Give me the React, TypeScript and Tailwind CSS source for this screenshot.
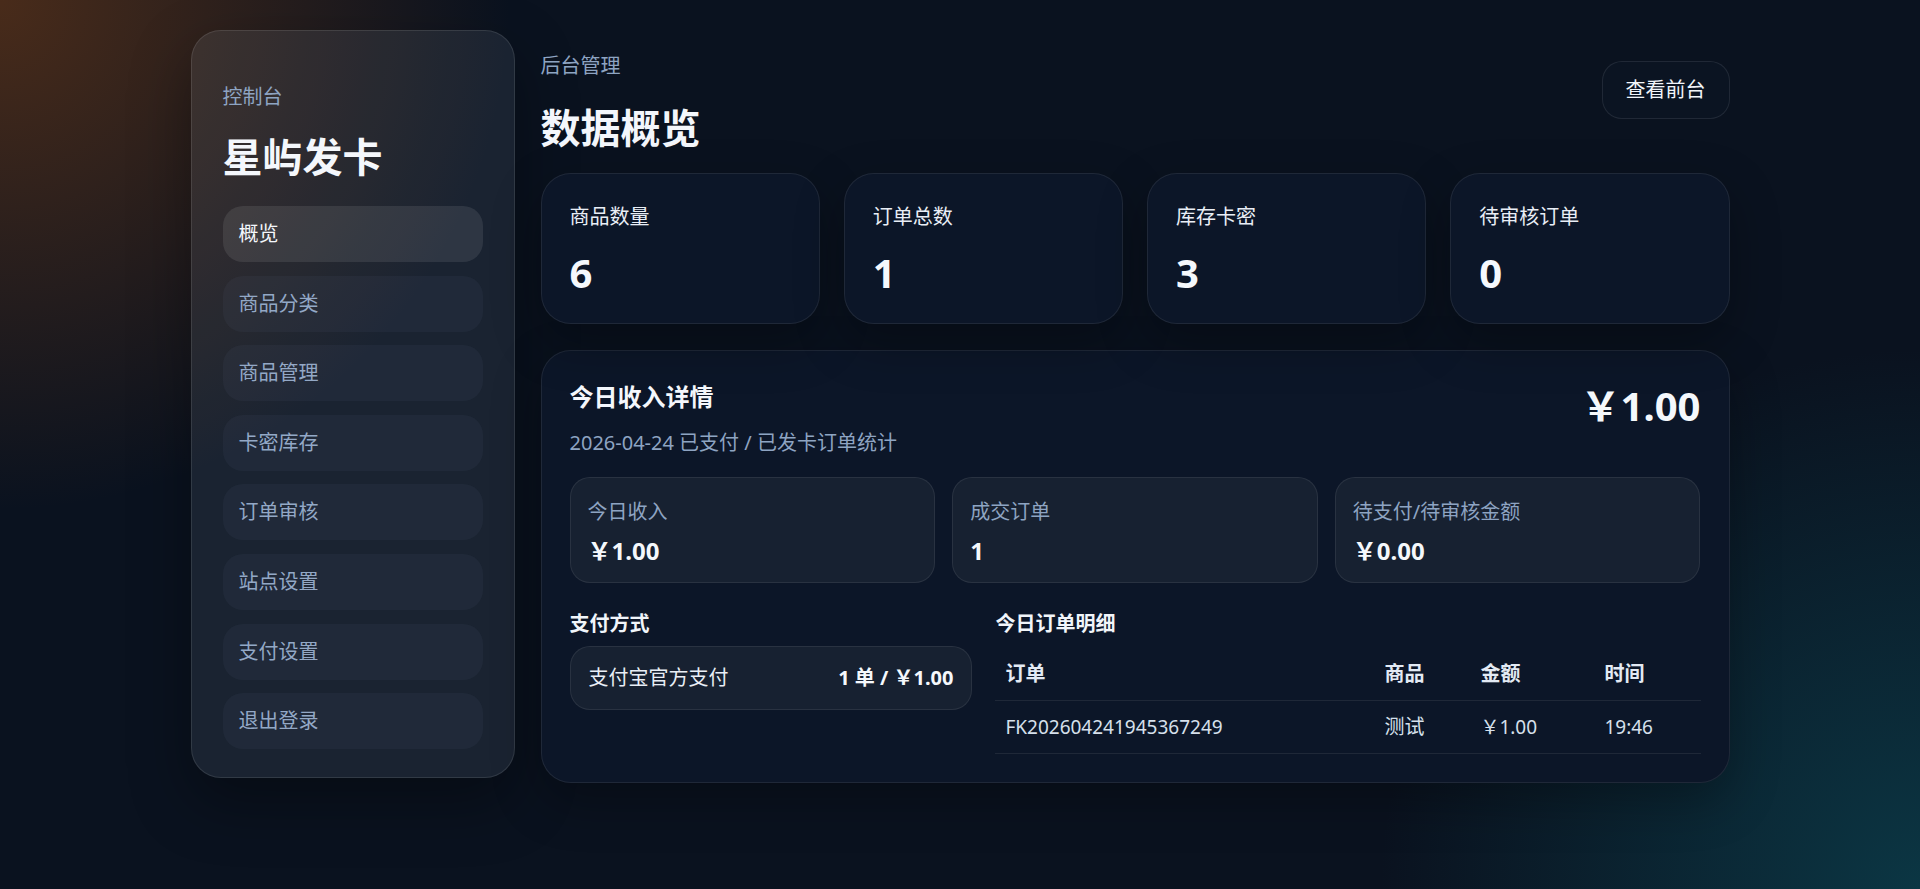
import React from 'react'

const navItems = ['概览', '商品分类', '商品管理', '卡密库存', '订单审核', '站点设置', '支付设置', '退出登录']

const stats = [
  { label: '商品数量', value: '6' },
  { label: '订单总数', value: '1' },
  { label: '库存卡密', value: '3' },
  { label: '待审核订单', value: '0' },
]

const todayBoxes = [
  { label: '今日收入', value: '￥1.00' },
  { label: '成交订单', value: '1' },
  { label: '待支付/待审核金额', value: '￥0.00' },
]

const orders = [{ id: 'FK202604241945367249', product: '测试', amount: '￥1.00', time: '19:46' }]

export default function App() {
  return (
    <div
      className="min-h-screen w-full bg-[#0a121f] bg-[image:radial-gradient(680px_circle_at_0%_0%,rgba(124,64,22,0.55),transparent_75%),radial-gradient(720px_circle_at_100%_100%,rgba(12,78,92,0.6),transparent_75%)] text-white"
      style={{ fontFamily: '"Noto Sans", "Noto Sans CJK SC", sans-serif' }}
    >
      <div className="mx-auto flex w-[1539px] items-start gap-[26px] pt-[30px] pb-[60px]">
        <Sidebar />

        <main className="min-w-0 flex-1">
          {/* header */}
          <div className="flex items-start justify-between pt-[21px]">
            <div>
              <div className="text-[20px] leading-[30px] text-[#8ea4c2]">后台管理</div>
              <h1 className="mt-[23px] text-[40px] font-bold leading-[48px] text-[#f3f6fb]">数据概览</h1>
            </div>
            <button className="mt-[10px] h-[58px] rounded-[20px] border border-white/[0.09] bg-[#0c1524]/60 px-[23px] text-[20px] leading-[30px] text-[#f1f5fa]">
              查看前台
            </button>
          </div>

          {/* stat cards */}
          <div className="mt-[21px] grid grid-cols-4 gap-[24px]">
            {stats.map((s) => (
              <div
                key={s.label}
                className="rounded-[30px] border border-white/[0.08] bg-[#0c1628] px-[28px] pt-[28px] pb-[26px] shadow-[0_18px_50px_rgba(0,0,0,0.3)]"
              >
                <div className="text-[20px] leading-[30px] text-[#e9eef6]">{s.label}</div>
                <div className="mt-[17px] text-[40px] font-bold leading-[48px] text-[#f5f8fc]">{s.value}</div>
              </div>
            ))}
          </div>

          <TodayPanel />
        </main>
      </div>
    </div>
  )
}

function Sidebar() {
  return (
    <aside className="w-[324px] shrink-0 rounded-[30px] border border-white/[0.1] bg-slate-400/[0.12] px-[31px] pt-[51px] pb-[28px] shadow-[0_24px_60px_rgba(0,0,0,0.35)]">
      <div className="text-[20px] leading-[30px] text-[#8ea4c2]">控制台</div>
      <div className="mt-[21px] text-[40px] font-bold leading-[48px] text-[#f4f7fc]">星屿发卡</div>
      <nav className="mt-[25px] flex flex-col gap-[13.6px]">
        {navItems.map((item, i) => (
          <div
            key={item}
            className={`flex h-[56px] items-center rounded-[20px] px-[16px] text-[20px] leading-[30px] ${
              i === 0 ? 'bg-white/[0.09] text-[#f4f7fc]' : 'bg-slate-400/[0.06] text-[#93a8c6]'
            }`}
          >
            {item}
          </div>
        ))}
      </nav>
    </aside>
  )
}

function TodayPanel() {
  return (
    <section className="mt-[26px] rounded-[30px] border border-white/[0.08] bg-[#0c1628] p-[28px] shadow-[0_18px_50px_rgba(0,0,0,0.3)]">
      <div className="flex items-start justify-between">
        <div>
          <h2 className="text-[24px] font-bold leading-[36px] text-[#f4f7fc]">今日收入详情</h2>
          <p className="mt-[13px] text-[20px] leading-[30px] text-[#8ea4c2]">2026-04-24 已支付 / 已发卡订单统计</p>
        </div>
        <div className="mt-[3px] text-[40px] font-bold leading-[48px] text-[#f5f8fc]">￥1.00</div>
      </div>

      <div className="mt-[19px] grid grid-cols-3 gap-[17px]">
        {todayBoxes.map((b) => (
          <div
            key={b.label}
            className="rounded-[20px] border border-white/[0.08] bg-[#172131] px-[17px] pt-[19px] pb-[17px]"
          >
            <div className="text-[20px] leading-[30px] text-[#8ea4c2]">{b.label}</div>
            <div className="mt-[9px] text-[24px] font-bold leading-[29px] text-[#f5f8fc]">{b.value}</div>
          </div>
        ))}
      </div>

      <div className="mt-[26px] grid grid-cols-[4fr_7fr] gap-[23px]">
        <div>
          <h3 className="text-[20px] font-bold leading-[30px] text-[#f1f5fa]">支付方式</h3>
          <div className="mt-[7px] flex h-[64px] items-center justify-between rounded-[20px] border border-white/[0.08] bg-[#172131] px-[18px]">
            <span className="text-[20px] leading-[30px] text-[#e8eef6]">支付宝官方支付</span>
            <span className="text-[20px] font-bold leading-[30px] text-[#f5f8fc]">1 单 / ￥1.00</span>
          </div>
        </div>

        <div>
          <h3 className="text-[20px] font-bold leading-[30px] text-[#f1f5fa]">今日订单明细</h3>
          <table className="mt-[9px] w-full table-fixed border-collapse text-left">
            <thead>
              <tr className="border-b border-white/[0.08]">
                <th className="w-[379px] px-[10px] py-[11px] text-[20px] font-bold leading-[30px] text-[#e3eaf4]">订单</th>
                <th className="w-[96px] px-[10px] py-[11px] text-[20px] font-bold leading-[30px] text-[#e3eaf4]">商品</th>
                <th className="w-[124px] px-[10px] py-[11px] text-[20px] font-bold leading-[30px] text-[#e3eaf4]">金额</th>
                <th className="px-[10px] py-[11px] text-[20px] font-bold leading-[30px] text-[#e3eaf4]">时间</th>
              </tr>
            </thead>
            <tbody>
              {orders.map((o) => (
                <tr key={o.id} className="border-b border-white/[0.08]">
                  <td className="px-[10px] py-[11px] text-[19px] leading-[30px] text-[#d6e0ec]">{o.id}</td>
                  <td className="px-[10px] py-[11px] text-[20px] leading-[30px] text-[#d6e0ec]">{o.product}</td>
                  <td className="px-[10px] py-[11px] text-[19px] leading-[30px] text-[#d6e0ec]">{o.amount}</td>
                  <td className="px-[10px] py-[11px] text-[19px] leading-[30px] text-[#d6e0ec]">{o.time}</td>
                </tr>
              ))}
            </tbody>
          </table>
        </div>
      </div>
    </section>
  )
}
